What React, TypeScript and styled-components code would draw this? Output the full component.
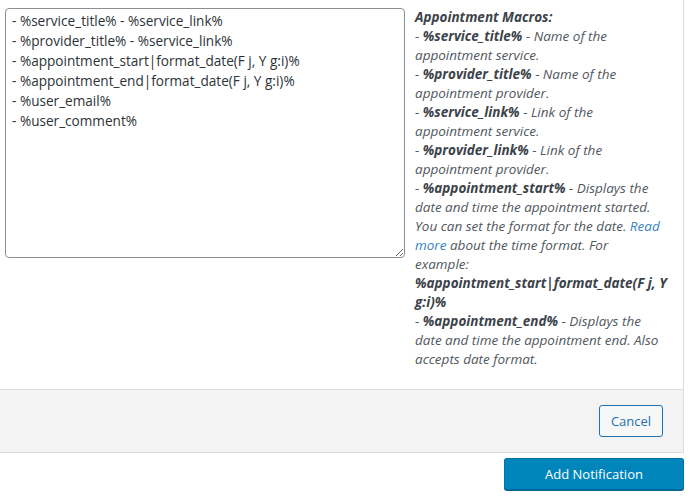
import React from "react";
import styled, { createGlobalStyle } from "styled-components";

const Global = createGlobalStyle`
  html, body { margin: 0; padding: 0; background: #fff; }
  body { font-family: "Open Sans", "Noto Sans", sans-serif; color: #2c3338; }
`;

const Page = styled.div`
  width: 690px;
  height: 498px;
  overflow: hidden;
`;

const Panel = styled.div`
  width: 684px;
  box-sizing: border-box;
  border-right: 1px solid #dcdcde;
  background: #fff;
`;

const Body = styled.div`
  display: flex;
  align-items: flex-start;
  gap: 10px;
  padding: 8px 0 20px 5px;
`;

const Editor = styled.textarea`
  width: 400px;
  height: 250px;
  box-sizing: border-box;
  flex: none;
  margin: 0;
  padding: 2px 6px;
  border: 1px solid #8c8f94;
  border-radius: 4px;
  font-family: "Open Sans", "Noto Sans", sans-serif;
  font-size: 13.6px;
  line-height: 20px;
  color: #2c3338;
  background: #fff;
  resize: both;
  outline: none;
`;

const Help = styled.p`
  margin: 0;
  font-family: "Open Sans", "Noto Sans", sans-serif;
  font-size: 13.5px;
  line-height: 19px;
  font-style: italic;
  color: #50575e;
  white-space: nowrap;
`;

const Macro = styled.b`
  font-weight: 700;
  color: #3c434a;
`;

const Link = styled.a`
  color: #3582c4;
  text-decoration: none;
`;

const Footer = styled.div`
  display: flex;
  justify-content: flex-end;
  align-items: center;
  height: 64px;
  box-sizing: border-box;
  padding: 0 20px 1px 0;
  background: #f3f3f3;
  border-top: 1px solid #dcdcde;
  border-bottom: 1px solid #dcdcde;
`;

const Actions = styled.div`
  display: flex;
  justify-content: flex-end;
  width: 684px;
  padding-top: 5px;
`;

const Button = styled.button<{ $primary?: boolean }>`
  box-sizing: border-box;
  height: 32px;
  padding: 0 ${(p) => (p.$primary ? "0" : "10px")};
  width: ${(p) => (p.$primary ? "180px" : "64px")};
  font-family: "Open Sans", "Noto Sans", sans-serif;
  font-size: 13px;
  line-height: 30px;
  border-radius: 3px;
  cursor: pointer;
  border: 1px solid ${(p) => (p.$primary ? "#0073aa" : "#2271b1")};
  background: ${(p) => (p.$primary ? "#0085ba" : "#f6f7f7")};
  color: ${(p) => (p.$primary ? "#fff" : "#2271b1")};
  box-shadow: ${(p) => (p.$primary ? "0 1px 0 #006799" : "none")};
  border-bottom-color: ${(p) => (p.$primary ? "#006799" : "#2271b1")};
`;

const text = [
  "- %service_title% - %service_link%",
  "- %provider_title% - %service_link%",
  "- %appointment_start|format_date(F j, Y g:i)%",
  "- %appointment_end|format_date(F j, Y g:i)%",
  "- %user_email%",
  "- %user_comment%",
].join("\n");

export default function App() {
  return (
    <Page>
      <Global />
      <Panel>
        <Body>
          <Editor readOnly defaultValue={text} />
          <Help>
            <Macro>Appointment Macros:</Macro>
            <br />- <Macro>%service_title%</Macro> - Name of the
            <br />appointment service.
            <br />- <Macro>%provider_title%</Macro> - Name of the
            <br />appointment provider.
            <br />- <Macro>%service_link%</Macro> - Link of the
            <br />appointment service.
            <br />- <Macro>%provider_link%</Macro> - Link of the
            <br />appointment provider.
            <br />- <Macro>%appointment_start%</Macro> - Displays the
            <br />date and time the appointment started.
            <br />You can set the format for the date. <Link href="#">Read</Link>
            <br />
            <Link href="#">more</Link> about the time format. For
            <br />example:
            <br />
            <Macro>%appointment_start|format_date(F j, Y</Macro>
            <br />
            <Macro>g:i)%</Macro>
            <br />- <Macro>%appointment_end%</Macro> - Displays the
            <br />date and time the appointment end. Also
            <br />accepts date format.
          </Help>
        </Body>
        <Footer>
          <Button>Cancel</Button>
        </Footer>
      </Panel>
      <Actions>
        <Button $primary>Add Notification</Button>
      </Actions>
    </Page>
  );
}
